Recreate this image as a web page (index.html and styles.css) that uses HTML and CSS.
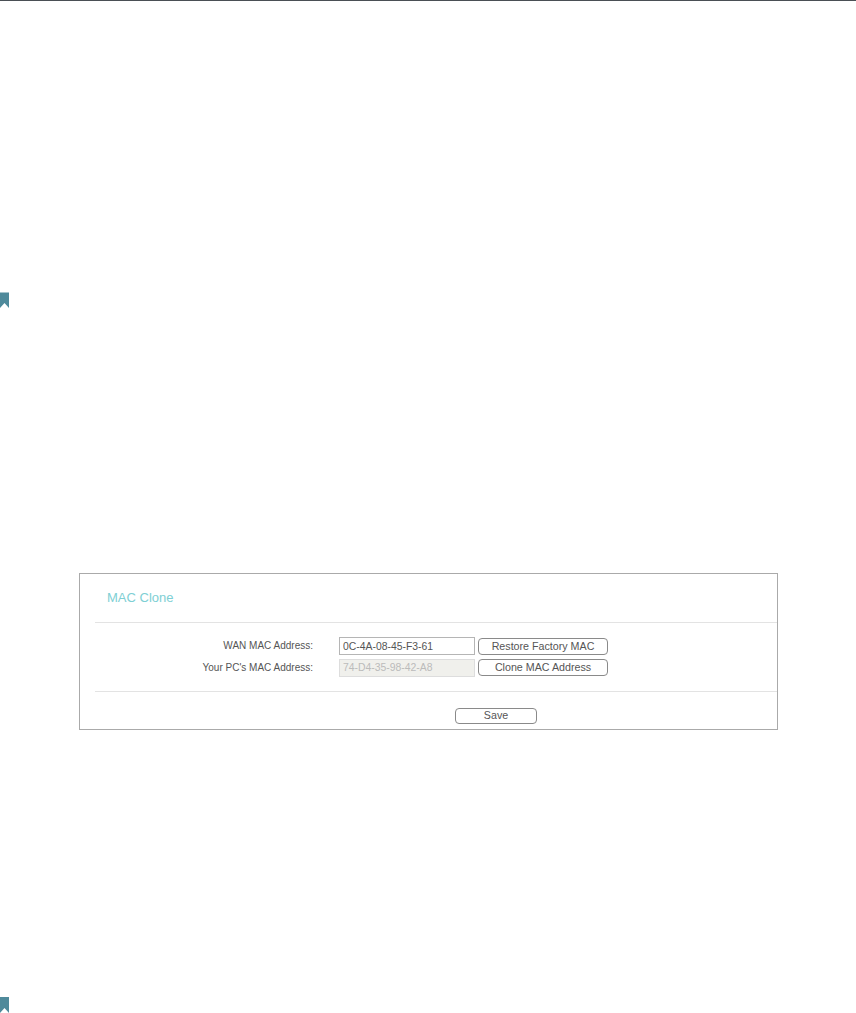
FILE: index.html
```html
<!DOCTYPE html>
<html lang="en">
<head>
    <meta charset="UTF-8">
    <meta name="viewport" content="width=device-width, initial-scale=1.0">
    <title>MAC Clone</title>
    <link rel="stylesheet" href="styles.css">
</head>
<body>
    <div class="top-rule"></div>

    <svg class="bookmark bookmark-first" width="9" height="16" viewBox="0 0 9 16">
        <path d="M0 0.5H9V16L4.5 11L0 16Z" fill="#4f8a9b"/>
    </svg>

    <section class="panel">
        <h2 class="panel-title">MAC Clone</h2>
        <div class="form-rows">
            <div class="row">
                <label class="row-label">WAN MAC Address:</label>
                <input class="mac-input" type="text" value="0C-4A-08-45-F3-61">
                <button class="btn btn-wide">Restore Factory MAC</button>
            </div>
            <div class="row">
                <label class="row-label">Your PC's MAC Address:</label>
                <input class="mac-input" type="text" value="74-D4-35-98-42-A8" disabled>
                <button class="btn btn-wide">Clone MAC Address</button>
            </div>
        </div>
        <div class="panel-foot">
            <button class="btn btn-save">Save</button>
        </div>
    </section>

    <svg class="bookmark bookmark-last" width="9" height="16" viewBox="0 0 9 16">
        <path d="M0 0H9V16L4.5 11L0 16Z" fill="#4f8a9b"/>
    </svg>
</body>
</html>
```

FILE: styles.css
```css
html, body {
    height: 1013px;
    overflow: hidden;
}

body {
    font-family: "Liberation Sans", Arial, sans-serif;
    font-size: 10px;
    color: #555;
    margin: 0;
    padding: 0;
    background-color: #fff;
    display: flex;
    flex-direction: column;
    align-items: flex-start;
}

.top-rule {
    width: 100%;
    height: 1px;
    background-color: #4a4f55;
    flex: none;
}

.bookmark {
    display: block;
    flex: none;
}

.bookmark-first {
    margin-top: 291px;
}

.bookmark-last {
    margin-top: 267px;
}

.panel {
    box-sizing: border-box;
    width: 699px;
    height: 157px;
    margin: 265px 0 0 79px;
    border: 1px solid #aaa;
    flex: none;
}

.panel-title {
    box-sizing: border-box;
    height: 49px;
    margin: 0 0 0 15px;
    padding: 16px 0 0 12px;
    font-size: 13px;
    line-height: 16px;
    font-weight: normal;
    color: #7ecfd4;
    border-bottom: 1px solid #e3e3e3;
}

.form-rows {
    box-sizing: border-box;
    height: 69px;
    margin-left: 15px;
    padding-top: 14px;
    display: flex;
    flex-direction: column;
    gap: 4px;
    border-bottom: 1px solid #e3e3e3;
}

.row {
    display: flex;
    align-items: flex-start;
    height: 18px;
}

.row-label {
    width: 218px;
    line-height: 18px;
    text-align: right;
    margin-right: 26px;
}

.mac-input {
    box-sizing: border-box;
    width: 136px;
    height: 18px;
    margin: 0 3px 0 0;
    padding: 0 3px;
    font-family: inherit;
    font-size: 10.4px;
    color: #555;
    background-color: #fff;
    border: 1px solid #b5b5b5;
    border-radius: 0;
}

.mac-input:disabled {
    padding-bottom: 2px;
    color: #bbb;
    background-color: #f0f0ec;
    border-color: #ddd;
}

.btn {
    box-sizing: border-box;
    padding: 0 0 1px;
    font-family: inherit;
    font-size: 10.7px;
    color: #555;
    background-color: #fff;
    border: 1px solid #8a8a8a;
    border-radius: 4px;
    cursor: pointer;
}

.btn-wide {
    width: 130px;
    height: 17px;
    margin-top: 1px;
}

.row + .row .btn-wide {
    margin-top: 0;
}

.panel-foot {
    margin-left: 375px;
    padding-top: 16px;
}

.btn-save {
    display: block;
    width: 82px;
    height: 16px;
    padding-bottom: 2px;
}
```
